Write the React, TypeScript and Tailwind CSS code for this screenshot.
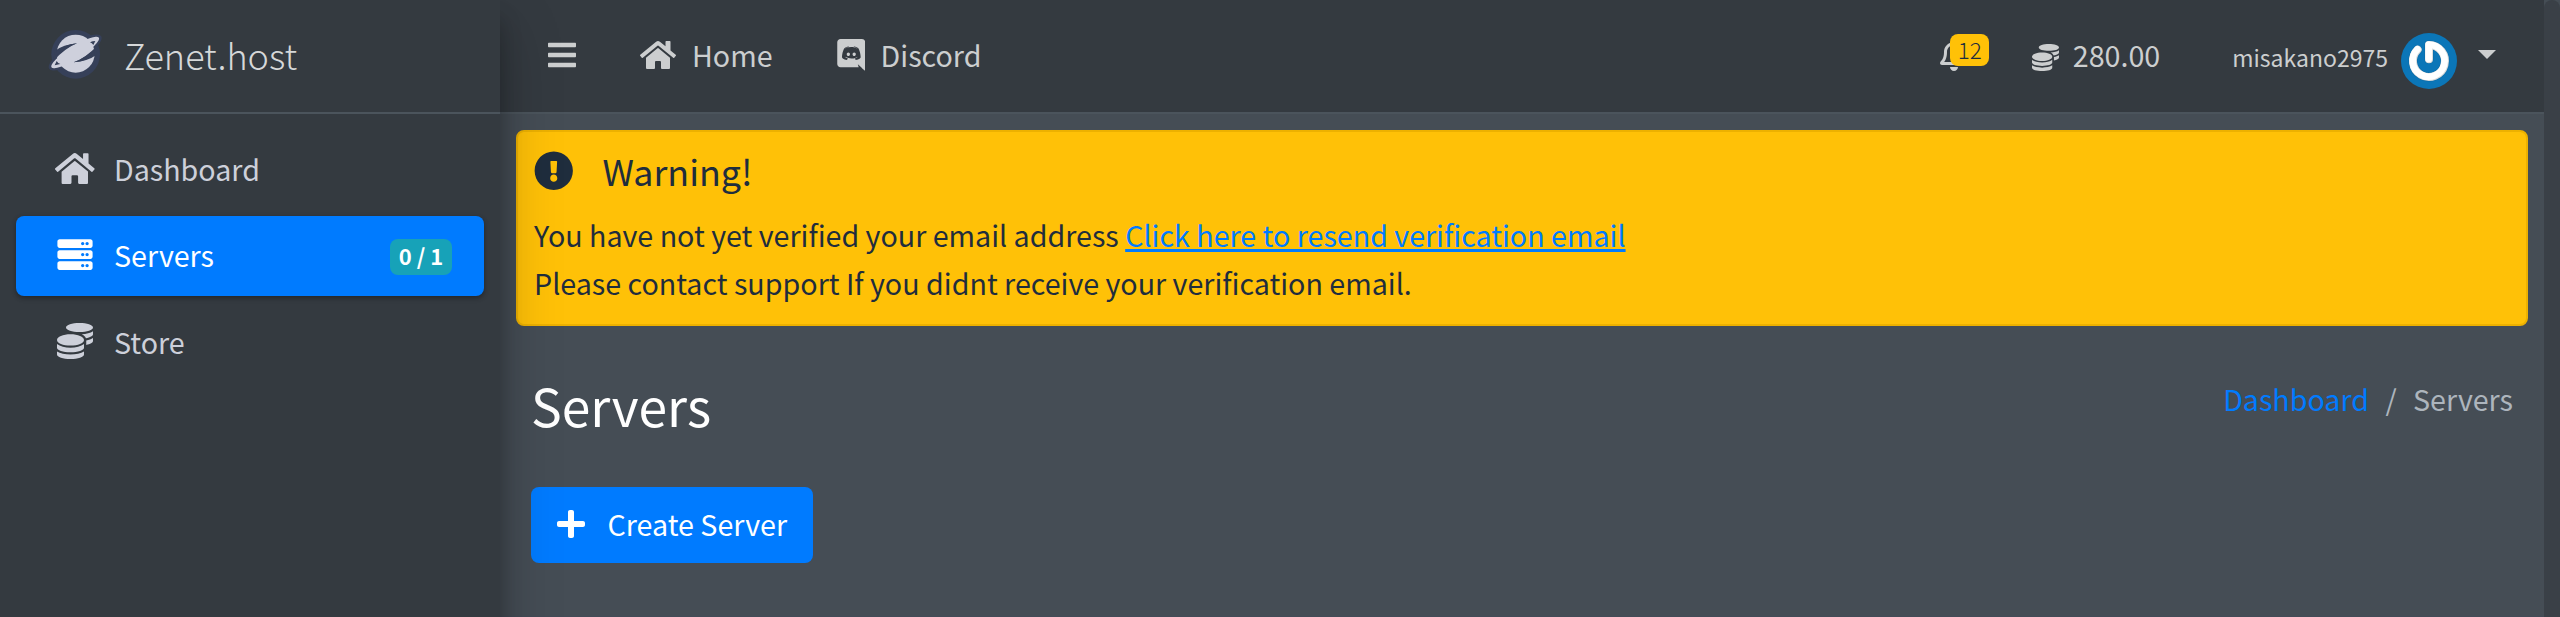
import type { ReactNode } from 'react';
import { FaBars, FaCoins, FaExclamationCircle, FaHome, FaPlus, FaRegBell, FaServer } from 'react-icons/fa';

function DiscordIcon({ className }: { className?: string }) {
  return (
    <svg viewBox="0 0 448 512" fill="currentColor" className={className}>
      <path d="M297.216 243.2c0 15.616-11.52 28.416-26.112 28.416-14.336 0-26.112-12.8-26.112-28.416s11.52-28.416 26.112-28.416c14.592 0 26.112 12.8 26.112 28.416zm-119.552-28.416c-14.592 0-26.112 12.8-26.112 28.416s11.776 28.416 26.112 28.416c14.592 0 26.112-12.8 26.112-28.416.256-15.616-11.52-28.416-26.112-28.416zM448 52.736V512c-64.494-56.994-43.868-38.128-118.784-107.776l13.568 47.36H52.48C23.552 451.584 0 428.032 0 398.848V52.736C0 23.552 23.552 0 52.48 0h343.04C424.448 0 448 23.552 448 52.736zm-72.96 242.688c0-82.432-36.864-149.248-36.864-149.248-36.864-27.648-71.936-26.88-71.936-26.88l-3.584 4.096c43.52 13.312 63.744 32.512 63.744 32.512-60.811-33.329-132.244-33.335-191.232-7.424-9.472 4.352-15.104 7.424-15.104 7.424s21.248-20.224 67.328-33.536l-2.56-3.072s-35.072-.768-71.936 26.88c0 0-36.864 66.816-36.864 149.248 0 0 21.504 37.12 78.08 38.912 0 0 9.472-11.52 17.152-21.248-32.512-9.728-44.8-30.208-44.8-30.208 3.766 2.636 9.976 6.053 10.496 6.4 43.21 24.198 104.588 32.126 159.744 8.96 8.96-3.328 18.944-8.192 29.44-15.104 0 0-12.8 20.992-46.336 30.464 7.68 9.728 16.896 20.736 16.896 20.736 56.576-1.792 78.336-38.912 78.336-38.912z" />
    </svg>
  );
}

function PlanetLogo({ className }: { className?: string }) {
  return (
    <svg viewBox="45 25 180 156" className={className}>
      <g fill="#364059">
        <circle cx="137" cy="104" r="73" />
        <ellipse cx="135.500" cy="98.500" rx="92" ry="28" transform="rotate(-32 135.5 98.5)" />
      </g>
      <circle cx="137" cy="102" r="57" fill="#ced0dc" />
      <path fill="#364059" d="M74 94Q100 75 141 71Q106 85 70 124ZM200 105Q174 124 131 128Q166 115 202 78Z" />
      <ellipse cx="135.500" cy="98.500" rx="84" ry="19" transform="rotate(-32 135.5 98.5)" fill="#ced0dc" />
      <path fill="#364059" d="M74 137L80 124Q84 131 91 133ZM180 68Q188 64 196 64L190 76Q186 70 180 68Z" />
      <path fill="#364059" d="M80 94Q104 76 141 71Q112 81 82 106ZM195 105Q172 122 131 128Q162 117 192 91Z" />
    </svg>
  );
}

function Avatar({ className }: { className?: string }) {
  return (
    <svg viewBox="123 54 168 168" className={className}>
      <circle cx="207" cy="138" r="84" fill="#0b76b8" />
      <path d="M207 133V90A48 48 0 1 1 173 104" fill="none" stroke="#095a8d" strokeWidth="27" strokeLinecap="round" strokeLinejoin="round" opacity=".4" />
      <path d="M207 133V90A48 48 0 1 1 173 104" fill="none" stroke="#d9dcdd" strokeWidth="24" strokeLinecap="round" strokeLinejoin="round" />
      <path d="M206 132V89A48 48 0 1 1 172 103" fill="none" stroke="#fff" strokeWidth="20" strokeLinecap="round" strokeLinejoin="round" />
    </svg>
  );
}

function NavItem({ icon, label, active, badge }: { icon: ReactNode; label: string; active?: boolean; badge?: string }) {
  return (
    <li
      className={
        active
          ? 'flex h-[80px] items-center rounded-[8px] bg-[#007bff] pr-[32px] pb-[3px] pl-[39px] text-white shadow-[0_2px_6px_rgba(0,0,0,0.12),0_2px_4px_rgba(0,0,0,0.24)]'
          : 'flex h-[80px] items-center rounded-[8px] pr-[32px] pb-[3px] pl-[39px] text-[#cdd0da]'
      }
    >
      <span className="flex w-[40px] justify-center">{icon}</span>
      <span className="ml-[19px] flex-1 pt-[2px]">{label}</span>
      {badge && (
        <span className="mt-[5px] flex h-[36px] w-[62px] items-center justify-center rounded-[8px] bg-[#17a2b8] pb-[3px] text-[22px] leading-[33px] font-bold text-white">
          {badge}
        </span>
      )}
    </li>
  );
}

export default function App() {
  return (
    <div className="flex h-[617px] w-[2560px] overflow-hidden bg-[#454d55] font-['Noto_Sans_CJK_SC','Noto_Sans',sans-serif] text-[28.65px] leading-[48px] whitespace-nowrap">
      <aside className="relative z-10 h-[720px] w-[500px] shrink-0 bg-[#343a40] shadow-[0_28px_56px_rgba(0,0,0,0.25),0_20px_20px_rgba(0,0,0,0.22)]">
        <div className="flex h-[114px] items-center border-b-2 border-[#4b545c] pb-[4px] pl-[45px]">
          <PlanetLogo className="h-[52px] w-[60px]" />
          <span className="ml-[19px] text-[36px] font-light text-[#d6d8d9]">Zenet.host</span>
        </div>
        <ul className="flex flex-col gap-[6.4px] px-[16px] pt-[15.6px]">
          <NavItem icon={<FaHome className="h-[35.2px] w-[39.6px]" />} label="Dashboard" />
          <NavItem icon={<FaServer className="h-[35.2px] w-[36px]" />} label="Servers" active badge="0 / 1" />
          <NavItem icon={<FaCoins className="h-[36px] w-[36px]" />} label="Store" />
        </ul>
      </aside>

      <div className="flex h-full w-[2044px] shrink-0 flex-col">
        <nav className="flex h-[114px] shrink-0 items-start border-b-2 border-[#4b545c] bg-[#343a40] pt-[30.5px] text-[#cccecf]">
          <FaBars className="mt-[8.5px] ml-[48px] h-[32px] w-[28px]" />
          <FaHome className="mt-[8.5px] ml-[64px] h-[32px] w-[36px]" />
          <span className="ml-[16px]">Home</span>
          <DiscordIcon className="mt-[8.5px] ml-[64px] h-[32px] w-[28.500px]" />
          <span className="ml-[15.500px]">Discord</span>

          <div className="ml-auto flex items-start">
            <div className="relative mt-[8.5px] h-[32px] w-[28px]">
              <FaRegBell className="h-[32px] w-[28px]" />
              <span className="absolute top-[-5px] left-[10.500px] flex h-[32px] w-[39px] items-center justify-center rounded-[8px] bg-[#ffc107] pb-[2px] text-[22.5px] leading-[30px] font-light text-[#1f2d3d]">
                12
              </span>
            </div>
            <FaCoins className="mt-[13px] ml-[64px] h-[27px] w-[27px]" />
            <span className="ml-[14px]">280.00</span>
            <span className="mt-[2.500px] ml-[72px] text-[23px]">misakano2975</span>
            <Avatar className="mt-[2.500px] ml-[13px] h-[56px] w-[56px]" />
            <svg viewBox="0 0 18 9" className="mt-[19.500px] mr-[48px] ml-[21px] h-[9px] w-[18px]" fill="currentColor">
              <path d="M0 0H18L9 9Z" />
            </svg>
          </div>
        </nav>

        <main className="flex flex-1 flex-col pr-[16px] pl-[16px]">
          <section className="mt-[16px] h-[196px] rounded-[8px] border-2 border-[#edb100] bg-[#ffc107] pt-[14.500px] pl-[16px] text-[#1f2d3d]">
            <div className="flex h-[48px] items-center">
              <FaExclamationCircle className="h-[39.500px] w-[39.500px]" />
              <h5 className="ml-[29px] pb-[1px] text-[35.800px]">Warning!</h5>
            </div>
            <p className="mt-[16px]">
              You have not yet verified your email address{' '}
              <a className="text-[#007bff] underline decoration-[3px] underline-offset-[2px]">Click here to resend verification email</a>
            </p>
            <p>Please contact support If you didnt receive your verification email.</p>
          </section>

          <div className="mt-[45px] flex items-start justify-between pr-[15px] pl-[15px]">
            <h1 className="mt-[2px] text-[51.600px] leading-[64px] text-white">Servers</h1>
            <div className="mt-[3.500px] flex text-[#adb5bd]">
              <a className="text-[#007bff]">Dashboard</a>
              <span className="w-[44px] text-center">/</span>
              <span>Servers</span>
            </div>
          </div>

          <button className="mt-[50px] ml-[15px] flex h-[76px] w-[282px] shrink-0 items-center rounded-[8px] bg-[#007bff] pb-[3px] pl-[26px] text-white">
            <FaPlus className="h-[32px] w-[28px]" />
            <span className="ml-[22.500px]">Create Server</span>
          </button>
          <div className="-mx-[16px] mt-auto h-px bg-[#434b57]" />
        </main>
      </div>

      <div className="h-full w-[16px] shrink-0">
        <div className="h-full rounded-t-[8px] bg-[#3a4047]" />
      </div>
    </div>
  );
}
